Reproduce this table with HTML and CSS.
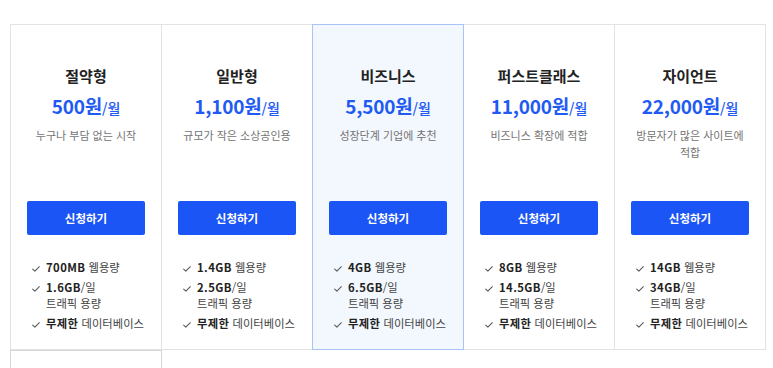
FILE: index.html
```html
<!DOCTYPE html>
<html lang="ko">
<head>
<meta charset="utf-8">
<title>요금제</title>
<link rel="stylesheet" href="styles.css">
</head>
<body>
<div class="page">
  <div class="plans">
    <div class="card">
      <h3 class="title">절약형</h3>
      <div class="price"><span class="amount">500원</span><span class="per">/월</span></div>
      <p class="desc">누구나 부담 없는 시작</p>
      <button class="btn">신청하기</button>
      <ul class="features">
        <li><svg class="check" viewBox="0 0 9 7"><polyline points="0.6,3.6 3.2,6 8.4,0.8"/></svg><span><b>700MB</b> 웹용량</span></li>
        <li><svg class="check" viewBox="0 0 9 7"><polyline points="0.6,3.6 3.2,6 8.4,0.8"/></svg><span><b>1.6GB</b>/일<br>트래픽 용량</span></li>
        <li><svg class="check" viewBox="0 0 9 7"><polyline points="0.6,3.6 3.2,6 8.4,0.8"/></svg><span><b>무제한</b> 데이터베이스</span></li>
      </ul>
    </div>
    <div class="card">
      <h3 class="title">일반형</h3>
      <div class="price"><span class="amount">1,100원</span><span class="per">/월</span></div>
      <p class="desc">규모가 작은 소상공인용</p>
      <button class="btn">신청하기</button>
      <ul class="features">
        <li><svg class="check" viewBox="0 0 9 7"><polyline points="0.6,3.6 3.2,6 8.4,0.8"/></svg><span><b>1.4GB</b> 웹용량</span></li>
        <li><svg class="check" viewBox="0 0 9 7"><polyline points="0.6,3.6 3.2,6 8.4,0.8"/></svg><span><b>2.5GB</b>/일<br>트래픽 용량</span></li>
        <li><svg class="check" viewBox="0 0 9 7"><polyline points="0.6,3.6 3.2,6 8.4,0.8"/></svg><span><b>무제한</b> 데이터베이스</span></li>
      </ul>
    </div>
    <div class="card featured">
      <h3 class="title">비즈니스</h3>
      <div class="price"><span class="amount">5,500원</span><span class="per">/월</span></div>
      <p class="desc">성장단계 기업에 추천</p>
      <button class="btn">신청하기</button>
      <ul class="features">
        <li><svg class="check" viewBox="0 0 9 7"><polyline points="0.6,3.6 3.2,6 8.4,0.8"/></svg><span><b>4GB</b> 웹용량</span></li>
        <li><svg class="check" viewBox="0 0 9 7"><polyline points="0.6,3.6 3.2,6 8.4,0.8"/></svg><span><b>6.5GB</b>/일<br>트래픽 용량</span></li>
        <li><svg class="check" viewBox="0 0 9 7"><polyline points="0.6,3.6 3.2,6 8.4,0.8"/></svg><span><b>무제한</b> 데이터베이스</span></li>
      </ul>
    </div>
    <div class="card">
      <h3 class="title">퍼스트클래스</h3>
      <div class="price"><span class="amount">11,000원</span><span class="per">/월</span></div>
      <p class="desc">비즈니스 확장에 적합</p>
      <button class="btn">신청하기</button>
      <ul class="features">
        <li><svg class="check" viewBox="0 0 9 7"><polyline points="0.6,3.6 3.2,6 8.4,0.8"/></svg><span><b>8GB</b> 웹용량</span></li>
        <li><svg class="check" viewBox="0 0 9 7"><polyline points="0.6,3.6 3.2,6 8.4,0.8"/></svg><span><b>14.5GB</b>/일<br>트래픽 용량</span></li>
        <li><svg class="check" viewBox="0 0 9 7"><polyline points="0.6,3.6 3.2,6 8.4,0.8"/></svg><span><b>무제한</b> 데이터베이스</span></li>
      </ul>
    </div>
    <div class="card">
      <h3 class="title">자이언트</h3>
      <div class="price"><span class="amount">22,000원</span><span class="per">/월</span></div>
      <p class="desc">방문자가 많은 사이트에 적합</p>
      <button class="btn">신청하기</button>
      <ul class="features">
        <li><svg class="check" viewBox="0 0 9 7"><polyline points="0.6,3.6 3.2,6 8.4,0.8"/></svg><span><b>14GB</b> 웹용량</span></li>
        <li><svg class="check" viewBox="0 0 9 7"><polyline points="0.6,3.6 3.2,6 8.4,0.8"/></svg><span><b>34GB</b>/일<br>트래픽 용량</span></li>
        <li><svg class="check" viewBox="0 0 9 7"><polyline points="0.6,3.6 3.2,6 8.4,0.8"/></svg><span><b>무제한</b> 데이터베이스</span></li>
      </ul>
    </div>
    <div class="card card-next"></div>
  </div>
</div>
</body>
</html>
```

FILE: styles.css
```css
* { box-sizing: border-box; }

html, body {
  margin: 0;
  padding: 0;
  background: #ffffff;
}

body {
  font-family: "Noto Sans CJK KR", "Noto Sans", sans-serif;
  color: #222;
}

.page {
  padding: 24px 7px 0 11px;
}

.plans {
  display: grid;
  grid-template-columns: repeat(5, 1fr);
}

.card {
  margin-left: -1px;
  border: 1px solid #e3e3e3;
  padding: 40px 16px 18px;
  background: #fff;
  display: flex;
  flex-direction: column;
  align-items: stretch;
}

.card.featured {
  position: relative;
  z-index: 1;
  background: #f3f8fe;
  border-color: #a9c2fa;
}

.card-next {
  height: 120px;
  border-color: #d6d6d6;
}

.title {
  margin: 0;
  font-size: 15px;
  line-height: 22px;
  font-weight: 700;
  text-align: center;
  color: #222;
}

.price {
  margin-top: 6px;
  height: 26px;
  line-height: 26px;
  text-align: center;
  color: #1f5bf3;
  white-space: nowrap;
}

.amount {
  font-size: 19px;
  font-weight: 700;
  letter-spacing: -0.2px;
}

.per {
  font-size: 14px;
  font-weight: 500;
}

.desc {
  margin: 8px 0 0;
  height: 51px;
  font-size: 11px;
  line-height: 17px;
  color: #737373;
  text-align: center;
}

.btn {
  margin-top: 23px;
  height: 34px;
  width: 100%;
  border: 0;
  border-radius: 2px;
  background: #1b55f5;
  color: #fff;
  font-family: inherit;
  font-size: 11.5px;
  font-weight: 700;
  cursor: pointer;
}

.features {
  list-style: none;
  margin: 24px 0 0;
  padding: 0 0 0 5px;
}

.features li {
  display: flex;
  align-items: flex-start;
  font-size: 11.3px;
  line-height: 16px;
  color: #444;
}

.features li + li {
  margin-top: 4px;
}

.features b {
  font-weight: 700;
  color: #222;
  letter-spacing: 0.4px;
}

.check {
  flex: none;
  width: 8px;
  height: 6px;
  margin: 7px 6px 0 0;
  fill: none;
  stroke: #555;
  stroke-width: 1.2;
  stroke-linecap: round;
  stroke-linejoin: round;
}
```
